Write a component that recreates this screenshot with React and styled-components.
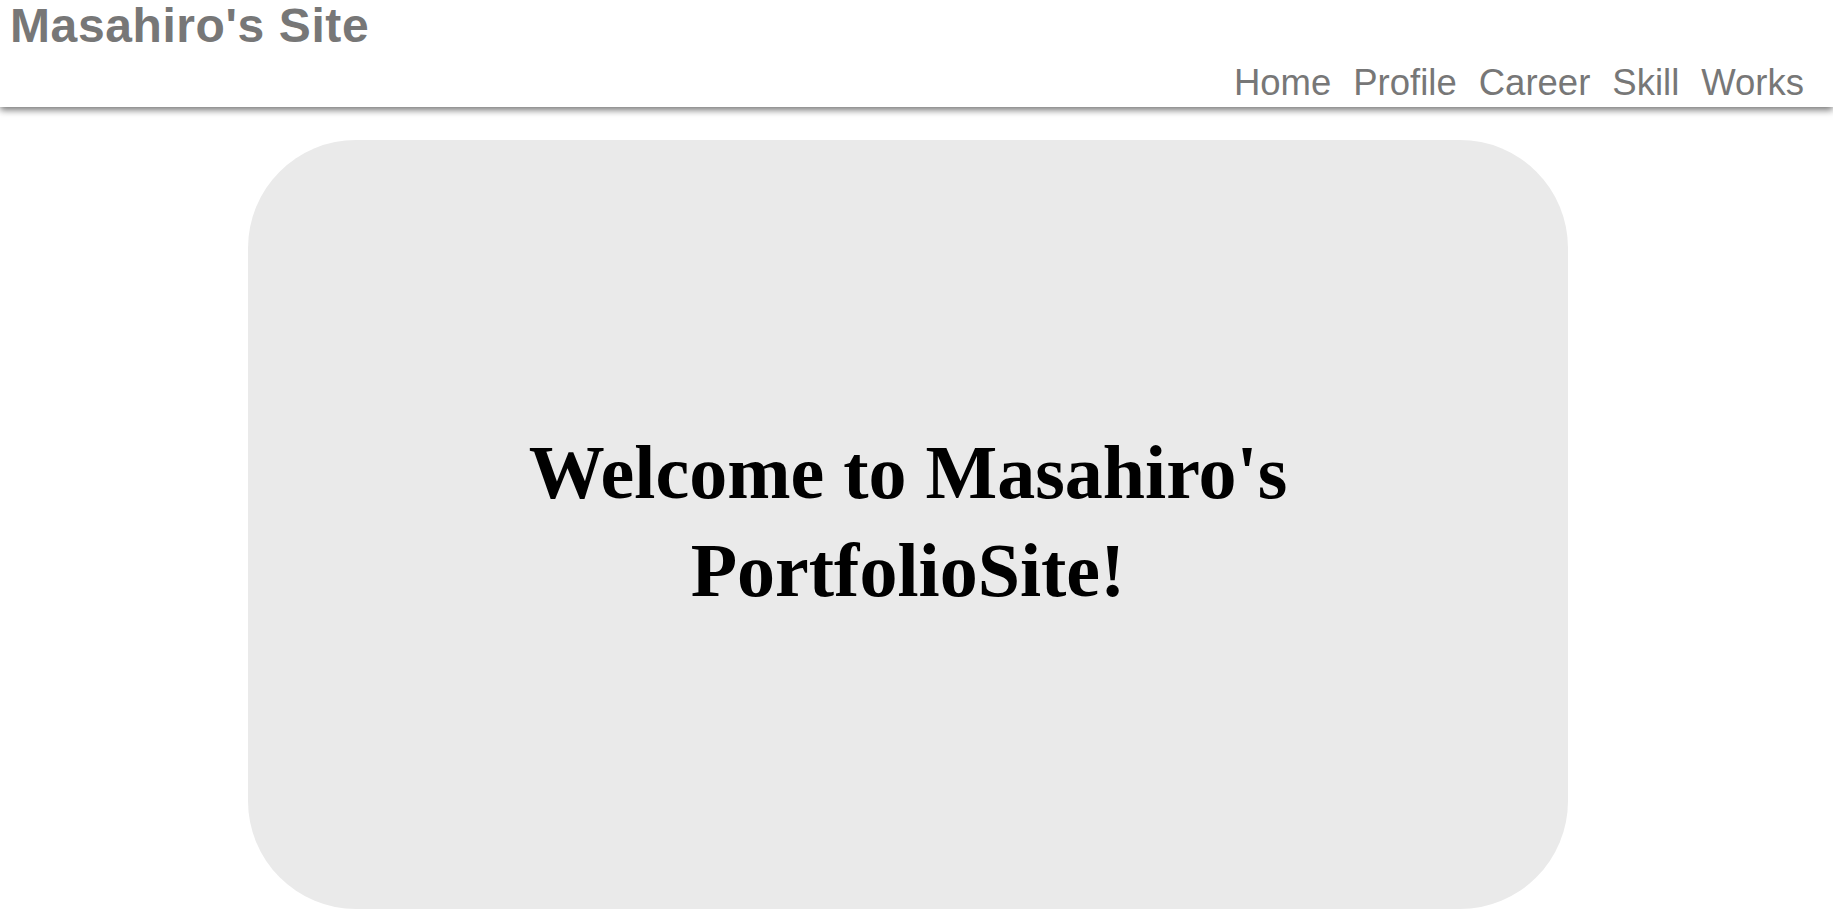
import React from 'react';
import styled, { createGlobalStyle } from 'styled-components';

const GlobalStyle = createGlobalStyle`
  body {
    margin: 0;
    background: #fff;
    font-family: "Liberation Sans", Arial, sans-serif;
  }
`

const Header = styled.header`
  height: 107px;
  display: flex;
  flex-direction: column;
  justify-content: space-between;
  background: #fff;
  box-shadow: 0 3px 7px rgba(0, 0, 0, 0.55);
  position: relative;
  z-index: 1;
`

const SiteTitle = styled.h1`
  margin: 0;
  padding: 2px 0 0 10px;
  font-size: 48px;
  line-height: 1;
  font-weight: 700;
  letter-spacing: 0.6px;
  color: #777;
`

const Nav = styled.nav`
  display: flex;
  justify-content: flex-end;
  gap: 22px;
  padding: 0 29px 6px 0;
`

const NavLink = styled.a`
  font-size: 36.5px;
  line-height: 1;
  color: #777;
  text-decoration: none;
  cursor: pointer;
`

const Main = styled.main`
  padding: 33px 0 0 248px;
`

const Hero = styled.section`
  width: 1320px;
  height: 769px;
  box-sizing: border-box;
  padding-bottom: 8px;
  border-radius: 108px;
  background: #eaeaea;
  display: flex;
  align-items: center;
  justify-content: center;
`

const HeroTitle = styled.h2`
  margin: 0;
  width: 800px;
  text-align: center;
  font-family: "Liberation Serif", "Times New Roman", serif;
  font-weight: 700;
  font-size: 76px;
  line-height: 98px;
  color: #000;
`

const links = ['Home', 'Profile', 'Career', 'Skill', 'Works'];

class App extends React.Component {
  render() {
    return (
      <>
        <GlobalStyle />
        <Header>
          <SiteTitle>Masahiro's Site</SiteTitle>
          <Nav>
            {links.map(l => (
              <NavLink key={l}>{l}</NavLink>
            ))}
          </Nav>
        </Header>
        <Main>
          <Hero>
            <HeroTitle>Welcome to Masahiro's PortfolioSite!</HeroTitle>
          </Hero>
        </Main>
      </>
    );
  }
}

export default App;
